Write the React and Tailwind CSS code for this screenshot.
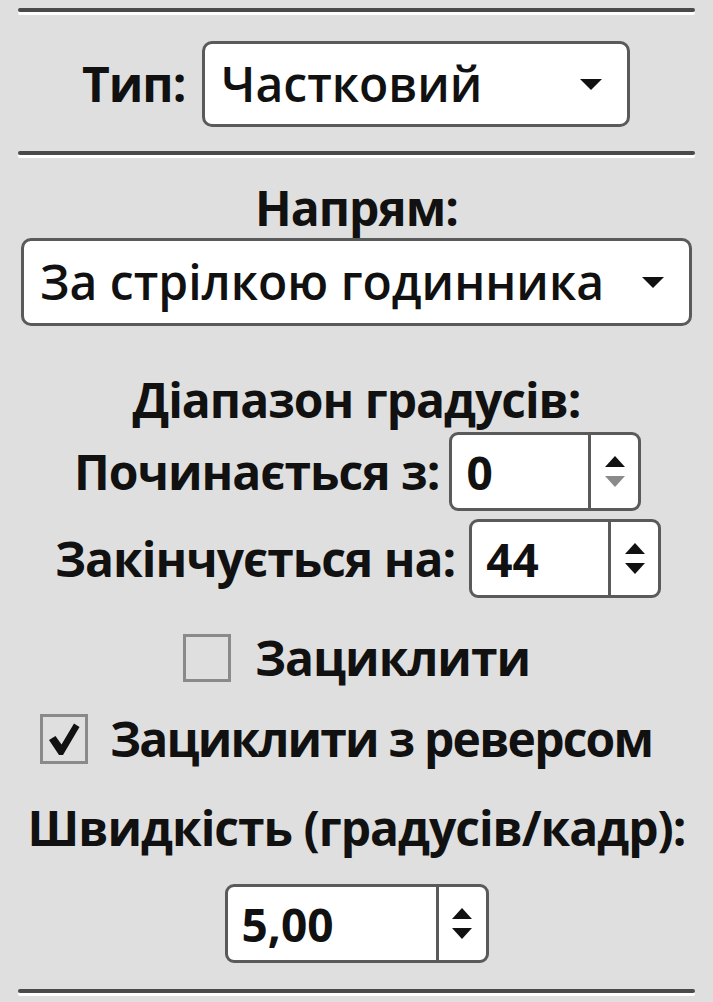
import React from 'react';

const font = { fontFamily: '"Open Sans", "Noto Sans", sans-serif' };

const Separator = () => (
  <div className="mx-[18px] h-[4px] rounded-full bg-[#4a4a4a] shadow-[0_3px_0_#ffffff]" />
);

const Caret = () => (
  <svg width="24" height="14" viewBox="0 0 24 14">
    <path d="M1 2h22L12 13z" fill="#111" />
  </svg>
);

const Select = ({ value, className }) => (
  <div
    className={`flex items-center justify-between rounded-[10px] border-[3px] border-[#5a5a5a] bg-white pl-[16px] pr-[24px] ${className}`}
  >
    <span className="text-[48px] font-semibold leading-none text-[#111]">{value}</span>
    <Caret />
  </div>
);

const SpinBox = ({ value, className, downDisabled }) => (
  <div className={`flex rounded-[9px] border-[3px] border-[#5a5a5a] bg-white ${className}`}>
    <div className="flex flex-1 items-center pl-[14px]">
      <span className="text-[46px] font-bold leading-none text-[#111]">{value}</span>
    </div>
    <div className="flex w-[50px] flex-col items-center justify-center gap-[7px] border-l-[3px] border-[#5a5a5a]">
      <svg width="22" height="13" viewBox="0 0 22 13">
        <path d="M11 1L21 12H1z" fill="#111" />
      </svg>
      <svg width="22" height="13" viewBox="0 0 22 13">
        <path d="M1 1h20L11 12z" fill={downDisabled ? '#8a8a8a' : '#111'} />
      </svg>
    </div>
  </div>
);

const Label = ({ children, className = 'tracking-[-1px]' }) => (
  <span className={`text-[48px] font-bold leading-none text-[#111] ${className}`}>{children}</span>
);

export default function App() {
  return (
    <div className="flex h-[1002px] w-[713px] flex-col bg-[#dfdfdf] pt-[8px]" style={font}>
      <Separator />

      {/* Type */}
      <div className="mt-[29px] flex items-center pl-[82px]">
        <Label>Тип:</Label>
        <Select value="Частковий" className="ml-[17px] h-[86px] w-[428px]" />
      </div>

      <div className="mt-[24px]">
        <Separator />
      </div>

      {/* Direction */}
      <div className="mt-[29px] flex justify-center">
        <Label>Напрям:</Label>
      </div>
      <Select value="За стрілкою годинника" className="mx-[21px] mt-[6px] h-[88px]" />

      {/* Degree range */}
      <div className="mt-[50px] flex justify-center">
        <Label>Діапазон градусів:</Label>
      </div>
      <div className="mt-[8px] flex items-center pl-[74px]">
        <Label>Починається з:</Label>
        <SpinBox value="0" className="ml-[10px] h-[79px] w-[192px]" downDisabled />
      </div>
      <div className="mt-[8px] flex items-center pl-[55px]">
        <Label>Закінчується на:</Label>
        <SpinBox value="44" className="ml-[14px] h-[79px] w-[192px]" />
      </div>

      {/* Loop */}
      <div className="mt-[36px] flex items-center pl-[183px]">
        <div className="h-[48px] w-[48px] border-[3px] border-[#8a8a8a] bg-[#dfdfdf]" />
        <Label className="ml-[24px] tracking-[-1px]">Зациклити</Label>
      </div>
      <div className="mt-[32px] flex items-center pl-[40px]">
        <div className="flex h-[50px] w-[48px] items-center justify-center border-[3px] border-[#8a8a8a]">
          <svg width="34" height="36" viewBox="0 0 34 36">
            <path d="M2 19l6.5-4 6 8.5L27 2.5l5.5 3.5-16.5 28h-4z" fill="#111" />
          </svg>
        </div>
        <Label className="ml-[22px] tracking-[-1.8px]">Зациклити з реверсом</Label>
      </div>

      {/* Speed */}
      <div className="mt-[40px] flex justify-center">
        <Label>Швидкість (градусів/кадр):</Label>
      </div>
      <div className="mt-[32px] flex justify-center">
        <SpinBox value="5,00" className="h-[79px] w-[264px]" />
      </div>

      <div className="mt-[26px]">
        <Separator />
      </div>
    </div>
  );
}
